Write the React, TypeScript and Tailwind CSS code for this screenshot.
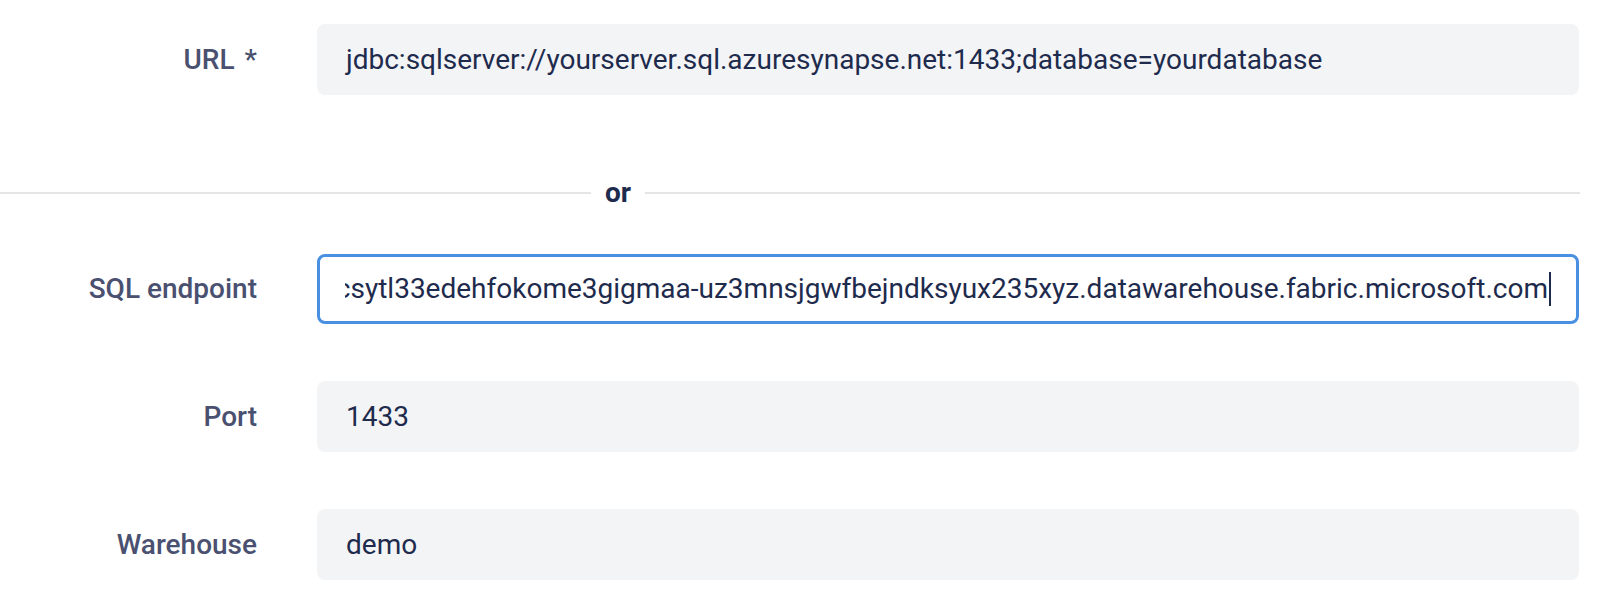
import React from "react";

function Row({ label, children }: { label: React.ReactNode; children: React.ReactNode }) {
  return (
    <div className="flex items-center">
      <div className="w-[257px] shrink-0 text-right text-[28px] font-medium text-[#4a5070]">{label}</div>
      <div className="ml-[60px] mr-[25px] min-w-0 flex-1">{children}</div>
    </div>
  );
}

function Field({ value }: { value: string }) {
  return (
    <div className="flex h-[71px] items-center rounded-[8px] bg-[#f3f4f6] pl-[29px] pr-[26px] text-[28px] text-[#1e2b4d]">
      <span className="whitespace-nowrap">{value}</span>
    </div>
  );
}

export default function App() {
  return (
    <div
      className="h-[612px] w-[1604px] overflow-hidden bg-white pt-[24px]"
      style={{ fontFamily: "Roboto, 'Noto Sans', sans-serif" }}
    >
      <Row
        label={
          <span>
            URL<span className="ml-[10px]">*</span>
          </span>
        }
      >
        <Field value="jdbc:sqlserver://yourserver.sql.azuresynapse.net:1433;database=yourdatabase" />
      </Row>

      <div className="mr-[24px] mt-[83px] flex h-[30px] items-center">
        <div className="h-[2px] w-[591px] bg-[#e5e5e7]" />
        <div className="px-[14px] text-[28px] font-bold text-[#1e2b4d]">or</div>
        <div className="h-[2px] flex-1 bg-[#e5e5e7]" />
      </div>

      <div className="mt-[46px]">
        <Row label="SQL endpoint">
          <div className="flex h-[70px] items-center rounded-[8px] border-[3px] border-[#4a90e2] bg-white pl-[25px] pr-[25px] text-[28px] text-[#1e2b4d]">
            <div className="flex min-w-0 flex-1 items-center justify-end overflow-hidden">
              <span className="shrink-0 whitespace-nowrap">
                5nqcsytl33edehfokome3gigmaa-uz3mnsjgwfbejndksyux235xyz.datawarehouse.fabric.microsoft.com
              </span>
              <span className="ml-[1px] inline-block h-[34px] w-[2px] shrink-0 bg-[#1e2b4d]" />
            </div>
          </div>
        </Row>
      </div>

      <div className="mt-[57px]">
        <Row label="Port">
          <Field value="1433" />
        </Row>
      </div>

      <div className="mt-[57px]">
        <Row label="Warehouse">
          <Field value="demo" />
        </Row>
      </div>
    </div>
  );
}
